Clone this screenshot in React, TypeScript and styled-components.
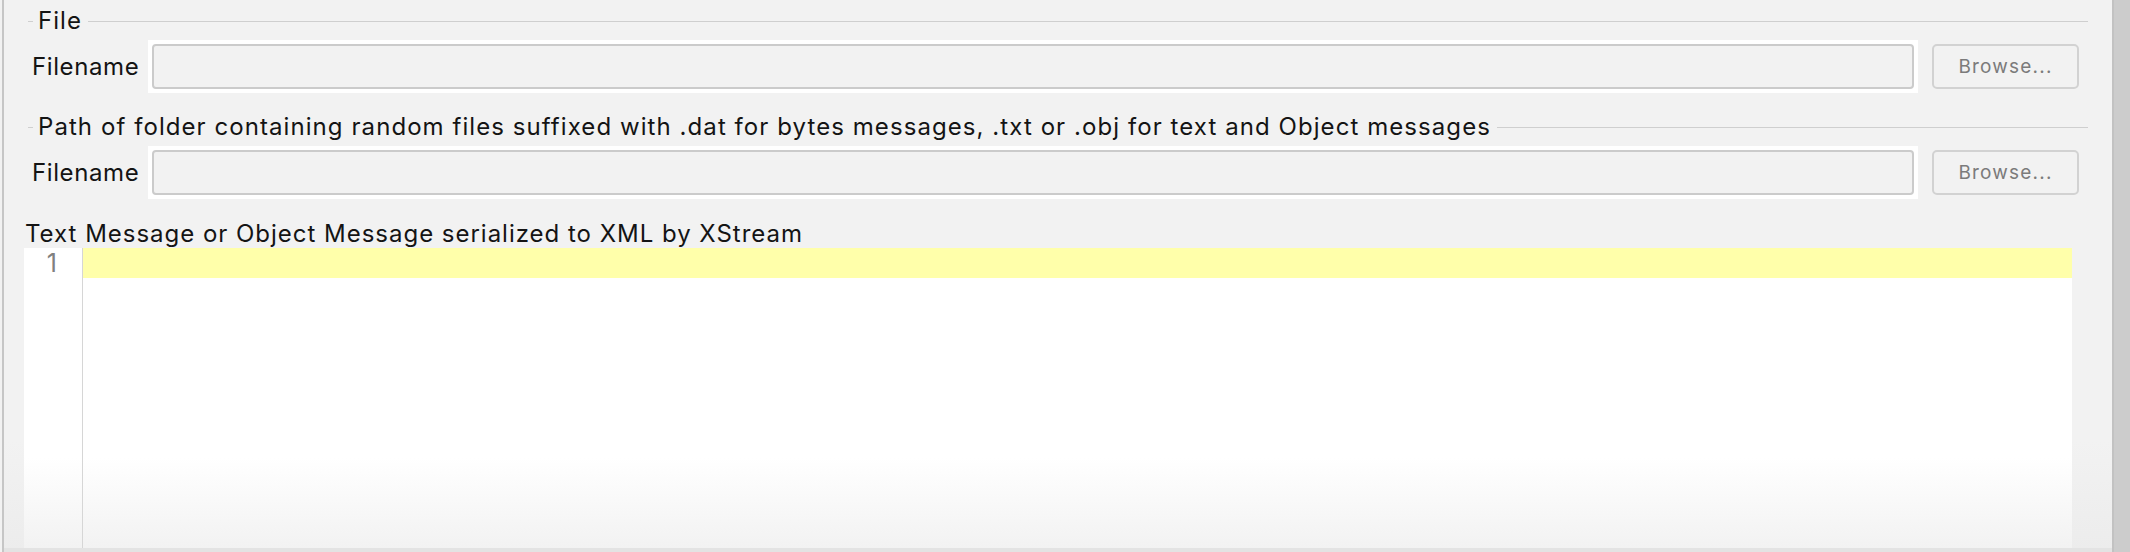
import React from 'react';
import styled, { createGlobalStyle } from 'styled-components';

const GlobalStyle = createGlobalStyle`
  html, body {
    margin: 0;
    padding: 0;
    background: #f2f2f2;
  }
  body {
    font-family: Inter, "Liberation Sans", sans-serif;
    color: #141414;
  }
  * {
    box-sizing: border-box;
  }
`;

const Window = styled.div`
  width: 2130px;
  height: 552px;
  display: flex;
  background: #f2f2f2;
  overflow: hidden;
`;

const Panel = styled.div`
  flex: 1;
  display: flex;
  flex-direction: column;
  margin-left: 2px;
  border-left: 2px solid #c6c6c6;
  background: linear-gradient(to bottom, #f2f2f2 0%, #f2f2f2 80%, #ececec 100%);
`;

const Content = styled.div`
  flex: 1;
  display: flex;
  flex-direction: column;
  padding-top: 9px;
`;

const BottomEdge = styled.div`
  height: 4px;
  background: #e3e3e3;
`;

const ScrollStrip = styled.div`
  width: 18px;
  background: #cccccc;
  border-left: 2px solid #c2c2c2;
`;

const TitleRow = styled.div<{ $top?: number }>`
  display: flex;
  align-items: center;
  height: 24px;
  margin: ${(p) => p.$top ?? 0}px 24px 0 24px;
`;

const Dash = styled.span`
  width: 5px;
  height: 1px;
  background: #cfcfcf;
  margin-right: 5px;
`;

const Line = styled.span`
  flex: 1;
  height: 1px;
  background: #cfcfcf;
  margin-left: 6px;
`;

const Title = styled.span`
  font-size: 24px;
  letter-spacing: 1.07px;
  line-height: 24px;
  white-space: nowrap;
`;

const FieldRow = styled.div`
  display: flex;
  align-items: center;
  height: 53px;
  margin-top: 7px;
  padding-left: 28px;
  padding-right: 33px;
`;

const Label = styled.span`
  width: 116px;
  font-size: 24px;
  letter-spacing: 0.6px;
  line-height: 24px;
`;

const FieldFrame = styled.div`
  flex: 1;
  height: 53px;
  padding: 4px;
  background: #ffffff;
`;

const Field = styled.input`
  width: 100%;
  height: 45px;
  border: 2px solid #cbcbcb;
  border-radius: 4px;
  background: #f2f2f2;
  outline: none;
  padding: 0 8px;
  font: inherit;
`;

const BrowseButton = styled.button`
  width: 147px;
  height: 45px;
  margin-left: 14px;
  border: 2px solid #d2d2d2;
  border-radius: 5px;
  background: #f2f2f2;
  color: #7b7b7b;
  font-family: Inter, "Liberation Sans", sans-serif;
  font-size: 19px;
  letter-spacing: 1.2px;
  padding: 0;
`;

const EditorLabel = styled.div`
  margin: 21px 0 0 21px;
  height: 28px;
  font-size: 24px;
  letter-spacing: 0.98px;
  line-height: 28px;
`;

const Editor = styled.div`
  display: flex;
  height: 300px;
  margin: 0 40px 0 20px;
  background: linear-gradient(to bottom, #ffffff 0%, #ffffff 70%, #f2f2f2 100%);
`;

const Gutter = styled.div`
  width: 59px;
  border-right: 1px solid #d6d6d6;
  text-align: right;
  padding-right: 25px;
  color: #808080;
  font-size: 25px;
  line-height: 31px;
`;

const Lines = styled.div`
  flex: 1;
`;

const CurrentLine = styled.div`
  height: 30px;
  background: #ffffaa;
`;

const FileSection = ({ title, top }: { title: string; top?: number }) => (
  <>
    <TitleRow $top={top}>
      <Dash />
      <Title>{title}</Title>
      <Line />
    </TitleRow>
    <FieldRow>
      <Label>Filename</Label>
      <FieldFrame>
        <Field disabled />
      </FieldFrame>
      <BrowseButton disabled>Browse...</BrowseButton>
    </FieldRow>
  </>
);

const App = () => (
  <Window>
    <GlobalStyle />
    <Panel>
      <Content>
        <FileSection title="File" />
        <FileSection
          top={22}
          title="Path of folder containing random files suffixed with .dat for bytes messages, .txt or .obj for text and Object messages"
        />
        <EditorLabel>Text Message or Object Message serialized to XML by XStream</EditorLabel>
        <Editor>
          <Gutter>1</Gutter>
          <Lines>
            <CurrentLine />
          </Lines>
        </Editor>
      </Content>
      <BottomEdge />
    </Panel>
    <ScrollStrip />
  </Window>
);

export default App;
